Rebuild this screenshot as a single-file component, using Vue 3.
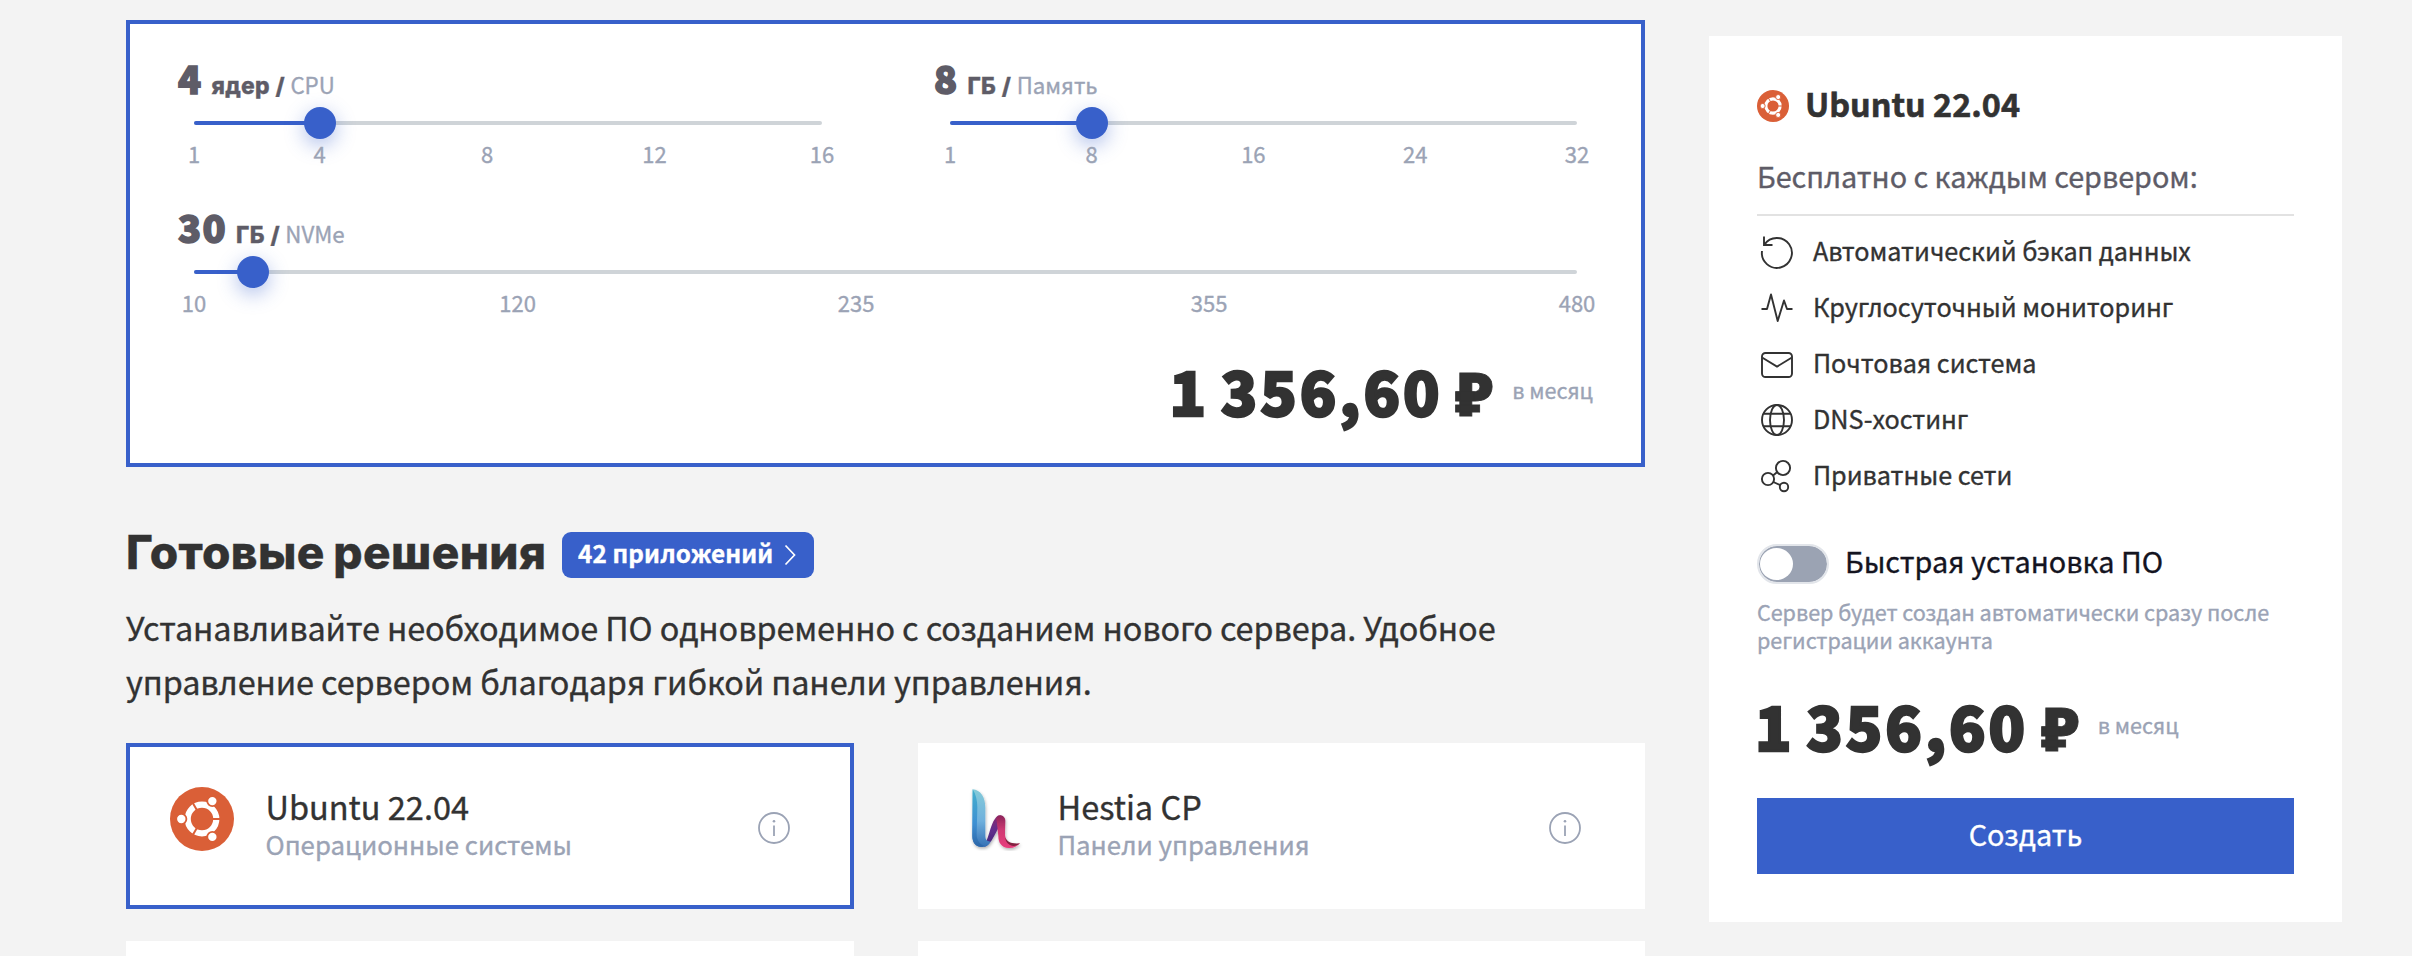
<script setup>
const sliders = [
  { id: 'cpu', value: 4, unit: 'ядер', label: 'CPU', min: 1, max: 16, ticks: [1, 4, 8, 12, 16] },
  { id: 'ram', value: 8, unit: 'ГБ', label: 'Память', min: 1, max: 32, ticks: [1, 8, 16, 24, 32] },
  { id: 'disk', value: 30, unit: 'ГБ', label: 'NVMe', min: 10, max: 480, ticks: [10, 120, 235, 355, 480], wide: true }
]
const pct = (s, v) => ((v - s.min) / (s.max - s.min)) * 100 + '%'

const apps = [
  { id: 'ubuntu', name: 'Ubuntu 22.04', group: 'Операционные системы', selected: true },
  { id: 'hestia', name: 'Hestia CP', group: 'Панели управления', selected: false }
]

const perks = [
  { id: 'backup', text: 'Автоматический бэкап данных' },
  { id: 'pulse', text: 'Круглосуточный мониторинг' },
  { id: 'mail', text: 'Почтовая система' },
  { id: 'dns', text: 'DNS-хостинг' },
  { id: 'net', text: 'Приватные сети' }
]
</script>

<template>
  <div class="page">
    <main class="main">
      <section class="config">
        <div class="sliders">
          <div v-for="s in sliders" :key="s.id" class="slider" :class="{ wide: s.wide }">
            <div class="slider-title">
              <span class="num">{{ s.value }}</span>
              <span class="unit">{{ s.unit }} /</span>
              <span class="kind">{{ s.label }}</span>
            </div>
            <div class="track">
              <div class="fill" :style="{ width: pct(s, s.value) }"></div>
              <div class="knob" :style="{ left: pct(s, s.value) }"></div>
            </div>
            <div class="ticks">
              <span v-for="t in s.ticks" :key="t" class="tick" :style="{ left: pct(s, t) }">{{ t }}</span>
            </div>
          </div>
        </div>
        <div class="price-row end">
          <div class="price">1 356,60 <span class="rub">₽</span></div>
          <div class="per">в месяц</div>
        </div>
      </section>

      <div class="heading">
        <h2>Готовые решения</h2>
        <a class="badge">
          <span>42 приложений</span>
          <svg width="12" height="22" viewBox="0 0 12 22"><path d="M1.5 1.5 10.5 11l-9 9.5" fill="none" stroke="#fff" stroke-width="1.7" /></svg>
        </a>
      </div>
      <p class="lead">Устанавливайте необходимое ПО одновременно с созданием нового сервера. Удобное<br>управление сервером благодаря гибкой панели управления.</p>

      <div class="cards">
        <article v-for="a in apps" :key="a.id" class="card" :class="{ selected: a.selected }">
          <svg v-if="a.id === 'ubuntu'" class="logo" viewBox="-32 -32 64 64">
            <circle r="32" fill="#da5f37" />
            <circle r="14.3" fill="none" stroke="#fff" stroke-width="6.2" />
            <g stroke="#da5f37">
              <path d="M10 0h9M-5 -8.66l-4.5 -7.8M-5 8.66l-4.5 7.8" stroke-width="2" />
              <g fill="#fff" stroke-width="1.8">
                <circle cx="-20.7" r="5.1" /><circle cx="10.35" cy="-17.9" r="5.1" /><circle cx="10.35" cy="17.9" r="5.1" />
              </g>
            </g>
          </svg>
          <svg v-else class="logo" viewBox="36 51 192 192">
            <defs>
              <linearGradient id="hb" x1="0" y1="0" x2="0" y2="1"><stop offset="0" stop-color="#84cbd9" /><stop offset=".55" stop-color="#6fb0dd" /><stop offset="1" stop-color="#3470b5" /></linearGradient>
              <linearGradient id="hd" x1="0" y1="0" x2="0" y2="1"><stop offset="0" stop-color="#45b0cd" /><stop offset=".6" stop-color="#3d8fd2" /><stop offset="1" stop-color="#2d66a8" /></linearGradient>
              <linearGradient id="hp" x1="0" y1="0" x2="0" y2="1"><stop offset="0" stop-color="#8d2a6d" /><stop offset=".45" stop-color="#632f8d" /><stop offset="1" stop-color="#41277a" /></linearGradient>
              <linearGradient id="hr" x1="0" y1="0" x2="0" y2="1"><stop offset="0" stop-color="#8c2459" /><stop offset=".45" stop-color="#cf3a73" /><stop offset="1" stop-color="#e83f7d" /></linearGradient>
              <filter id="hs" x="-20%" y="-20%" width="150%" height="150%"><feDropShadow dx="2" dy="5" stdDeviation="4" flood-color="#000" flood-opacity=".3" /></filter>
            </defs>
            <g filter="url(#hs)">
              <path d="M100 226C118 214 120 150 146 136 156 134 162 142 161 156 146 160 132 212 112 226 108 231 101 231 100 226Z" fill="url(#hp)" />
              <path d="M68 58C92 60 106 82 106 112V196C106 210 110 214 122 215 116 226 106 232 94 231 76 230 67 217 67 198Z" fill="url(#hb)" />
              <path d="M68 58C78 74 82 92 82 112L80 192C80 210 88 222 104 228 82 236 67 222 67 198Z" fill="url(#hd)" />
              <path d="M139 144C148 130 166 136 166 152L165 190C165 207 172 219 184 223 192 224 202 222 210 220 200 230 190 235 176 234 154 233 145 218 145 198Z" fill="url(#hr)" />
              <path d="M166 202C170 214 182 223 210 220 200 228 190 230 182 226 173 222 166 214 166 202Z" fill="#82203f" />
            </g>
          </svg>
          <div class="card-text">
            <div class="card-name">{{ a.name }}</div>
            <div class="card-group">{{ a.group }}</div>
          </div>
          <svg class="info" viewBox="0 0 32 32" fill="none" stroke="#9ba3b5" stroke-width="1.8">
            <circle cx="16" cy="16" r="15" /><path d="M16 13.5v10.5" /><circle cx="16" cy="9.3" r="1.3" fill="#9ba3b5" stroke="none" />
          </svg>
        </article>
        <article class="card"></article>
        <article class="card"></article>
      </div>
    </main>

    <aside class="side">
      <div class="side-title">
        <svg class="side-logo" viewBox="-32 -32 64 64">
          <circle r="32" fill="#da5f37" />
          <circle r="14.3" fill="none" stroke="#fff" stroke-width="6.2" />
          <g stroke="#da5f37">
            <path d="M10 0h9M-5 -8.66l-4.5 -7.8M-5 8.66l-4.5 7.8" stroke-width="2" />
            <g fill="#fff" stroke-width="1.8">
              <circle cx="-20.7" r="5.1" /><circle cx="10.35" cy="-17.9" r="5.1" /><circle cx="10.35" cy="17.9" r="5.1" />
            </g>
          </g>
        </svg>
        <span>Ubuntu 22.04</span>
      </div>
      <div class="free">Бесплатно с каждым сервером:</div>
      <ul class="perks">
        <li v-for="p in perks" :key="p.id">
          <svg viewBox="0 0 32 32" fill="none" stroke="#323232" stroke-width="1.9">
            <path v-if="p.id === 'backup'" d="M1 15A15 15 0 1 0 3.4 8.6M3 .5V9h8.5" />
            <path v-else-if="p.id === 'pulse'" d="M.5 17H6L10 2.5 16.7 29 23 8.5 26 17h5.5" stroke-linejoin="round" />
            <template v-else-if="p.id === 'mail'">
              <rect x="1" y="5" width="30" height="24" rx="3.5" /><path d="M1.5 9.8 16 18.6 30.5 9.8" />
            </template>
            <template v-else-if="p.id === 'dns'">
              <circle cx="16" cy="16" r="15" /><ellipse cx="16" cy="16" rx="7" ry="15" /><path d="M2.5 9.8h27M2.5 22.2h27" />
            </template>
            <template v-else>
              <circle cx="22" cy="8" r="7.1" /><circle cx="7" cy="19" r="6.1" /><circle cx="23" cy="27" r="4.2" />
              <path d="M12 15.5 16 12.2M12.3 22 19.3 25.2" />
            </template>
          </svg>
          <span>{{ p.text }}</span>
        </li>
      </ul>
      <div class="quick">
        <div class="toggle"></div>
        <span>Быстрая установка ПО</span>
      </div>
      <p class="hint">Сервер будет создан автоматически сразу после<br>регистрации аккаунта</p>
      <div class="price-row">
        <div class="price">1 356,60 <span class="rub">₽</span></div>
        <div class="per">в месяц</div>
      </div>
      <button class="create">Создать</button>
    </aside>
  </div>
</template>

<style>
body { background: #f3f3f3; }
</style>

<style scoped>
.page {
  width: 2412px;
  height: 956px;
  overflow: hidden;
  box-sizing: border-box;
  padding-left: 126px;
  display: flex;
  align-items: flex-start;
  gap: 64px;
  background: #f3f3f3;
  color: #323232;
  font-family: "Noto Sans CJK SC", "Noto Sans", sans-serif;
  -webkit-text-stroke: .35px currentColor;
}
.page * { box-sizing: border-box; }
.main { width: 1519px; flex: none; padding-top: 20px; }
.config { height: 447px; border: 4px solid #3860ca; background: #fff; padding: 34px 48px 0; }
.sliders { display: grid; grid-template-columns: 660px 659px; column-gap: 96px; row-gap: 42px; }
.slider { height: 107px; }
.wide { grid-column: 1 / 3; }
.slider-title { height: 40px; line-height: 40px; font-size: 38px; white-space: nowrap; display: flex; align-items: baseline; color: #5e5c67; }
.num { font-weight: 900; letter-spacing: 1.4px; -webkit-text-stroke: 1.6px #5e5c67; }
.unit { font-family: "Inter", sans-serif; font-weight: 800; font-size: 22.8px; line-height: 0; margin-left: 9px; word-spacing: .5px; letter-spacing: .25px; }
.kind { font-size: 22.3px; line-height: 0; color: #9ba3b5; margin-left: 5.5px; }
.track { position: relative; height: 4px; margin: 23px 16px 0; border-radius: 2px; background: #cfd4d8; }
.fill { height: 4px; border-radius: 2px; background: #3860ca; }
.knob { position: absolute; top: -14px; width: 32px; height: 32px; margin-left: -16px; border-radius: 50%; background: #3860ca; box-shadow: 0 6px 20px rgba(56, 96, 202, .4); }
.ticks { position: relative; height: 24px; margin: 16px 16px 0; }
.tick { position: absolute; top: 0; transform: translateX(-50%); font-size: 22px; line-height: 24px; color: #9ba3b5; }
.price-row { display: flex; align-items: flex-start; height: 70px; margin-top: 36px; }
.price-row.end { justify-content: flex-end; margin-top: 41px; }
.price { font-size: 60px; line-height: 70px; font-weight: 900; letter-spacing: 3px; word-spacing: -5px; white-space: nowrap; -webkit-text-stroke: 2.4px #323232; margin-left: -2px; }
.rub { display: inline-block; font-family: "Noto Sans", sans-serif; font-weight: 900; line-height: 0; letter-spacing: 0; margin-left: 1px; -webkit-text-stroke: .8px #323232; transform: scaleX(1.04); transform-origin: left; }
.per { font-size: 21.6px; line-height: 24px; margin: 23px 0 0 19px; color: #9ba3b5; }
.heading { display: flex; align-items: flex-start; margin-top: 65px; height: 46px; }
h2 { width: 436px; margin: 0; font-family: "Inter", sans-serif; font-size: 46px; line-height: 40px; font-weight: 800; letter-spacing: .4px; word-spacing: -2px; white-space: nowrap; }
.badge { width: 252px; height: 46px; border-radius: 9px; padding: 0 18px 0 16px; background: #3860ca; color: #fff; display: flex; justify-content: space-between; font-size: 24.3px; line-height: 42px; font-weight: 700; letter-spacing: .12px; white-space: nowrap; }
.badge svg { margin-top: 12px; }
.lead { margin: 22px 0 0; font-size: 32.4px; line-height: 54px; letter-spacing: -.1px; white-space: nowrap; }
.cards { margin-top: 35px; display: grid; grid-template-columns: 728px 727px; gap: 32px 64px; }
.card { height: 166px; padding: 40px 60px 0 40px; background: #fff; border: 4px solid #fff; display: flex; align-items: flex-start; }
.selected { border-color: #3860ca; }
.logo { width: 64px; height: 64px; flex: none; }
.card-text { flex: 1; margin: -3px 0 0 31.5px; }
.card-name { font-size: 32.5px; line-height: 44px; }
.card-group { font-size: 25.8px; line-height: 32px; color: #9ba3b5; }
.info { width: 32px; height: 32px; margin-top: 25px; }
.side { width: 633px; height: 886px; flex: none; margin-top: 36px; padding: 48px; background: #fff; }
.side-title { display: flex; gap: 16px; height: 38px; font-size: 32.4px; line-height: 38px; font-weight: 700; -webkit-text-stroke: .6px currentColor; }
.side-logo { width: 32px; height: 32px; margin-top: 6px; }
.free { margin-top: 34px; padding-bottom: 18px; border-bottom: 2px solid #e2e2e2; font-size: 28.8px; line-height: 40px; color: #5e5c67; white-space: nowrap; letter-spacing: -.03px; }
.perks { list-style: none; margin: 6px 0 0; padding: 0; }
.perks li { height: 56px; display: flex; gap: 20px; padding-left: 4px; font-size: 25.2px; line-height: 56px; letter-spacing: -.04px; white-space: nowrap; }
.perks svg { width: 32px; height: 32px; margin-top: 14px; overflow: visible; }
.quick { margin-top: 42px; height: 40px; display: flex; gap: 16px; font-size: 28.8px; line-height: 34px; color: #14141f; }
.toggle { width: 72px; height: 40px; border-radius: 20px; border: 2px solid #e2e5ea; background: #9ba3b3; background-clip: padding-box; padding: 2px 1px; }
.toggle::before { content: ""; display: block; width: 33px; height: 32px; border-radius: 50%; background: #fff; }
.hint { margin: 14px 0 0; font-size: 21.6px; line-height: 28px; letter-spacing: -.06px; color: #9ba3b5; white-space: nowrap; }
.create { display: block; width: 537px; height: 76px; margin-top: 38px; padding: 0 0 4px; border: 0; background: #3860ca; color: #fff; font: 400 28.8px/72px "Noto Sans CJK SC", sans-serif; -webkit-text-stroke: .35px currentColor; }
</style>
